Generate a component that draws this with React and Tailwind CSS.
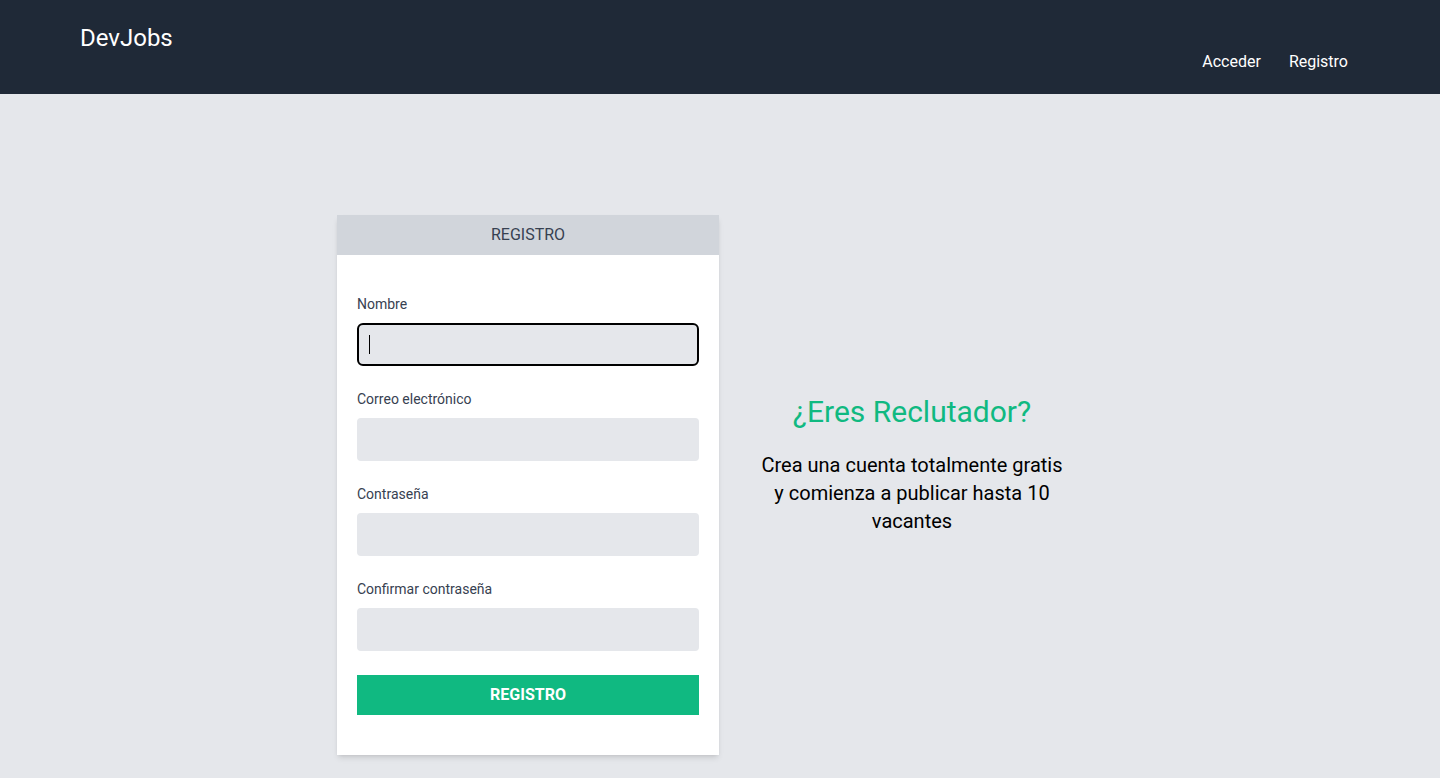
export default function App() {
  const fields = ["Correo electrónico", "Contraseña", "Confirmar contraseña"];
  return (
    <div className="min-h-[778px] bg-[#e5e7eb]" style={{ fontFamily: "Roboto, 'Liberation Sans', sans-serif" }}>
      <header className="h-[94px] bg-[#1f2937] flex justify-between pl-20 pr-[92px]">
        <div className="pt-[22px] text-2xl text-white">DevJobs</div>
        <nav className="pt-[50px] flex gap-7 text-base text-white">
          <a>Acceder</a>
          <a>Registro</a>
        </nav>
      </header>
      <main className="pt-[121px] flex justify-center">
        <div className="flex w-[766px]">
          <div className="w-[382px] shrink-0 bg-white shadow-md">
            <div className="h-10 bg-[#d1d5db] flex items-center justify-center text-base text-[#374151]">REGISTRO</div>
            <form className="px-5 pt-[39px] pb-10">
              <div className="mb-[23px]">
                <label className="block text-sm leading-5 text-[#374151] mb-[9px]">Nombre</label>
                <div className="relative">
                  <input className="block w-full h-[43px] bg-[#e5e7eb] rounded-md border-2 border-black outline-none" />
                  <span className="absolute left-3 top-3 w-px h-[19px] bg-black"></span>
                </div>
              </div>
              {fields.map((f, i) => (
                <div key={f} className={i === fields.length - 1 ? "mb-6" : "mb-[23px]"}>
                  <label className="block text-sm leading-5 text-[#374151] mb-[9px]">{f}</label>
                  <input className="block w-full h-[43px] bg-[#e5e7eb] rounded outline-none" />
                </div>
              ))}
              <button type="button" className="w-full h-10 bg-[#10b981] text-white font-bold text-base">REGISTRO</button>
            </form>
          </div>
          <div className="w-[384px] pl-[2px] flex flex-col items-center pt-[179px]">
            <h2 className="text-3xl text-[#10b981]">¿Eres Reclutador?</h2>
            <p className="mt-[21px] w-[306px] text-center text-xl leading-7 text-black">Crea una cuenta totalmente gratis y comienza a publicar hasta 10 vacantes</p>
          </div>
        </div>
      </main>
    </div>
  );
}
